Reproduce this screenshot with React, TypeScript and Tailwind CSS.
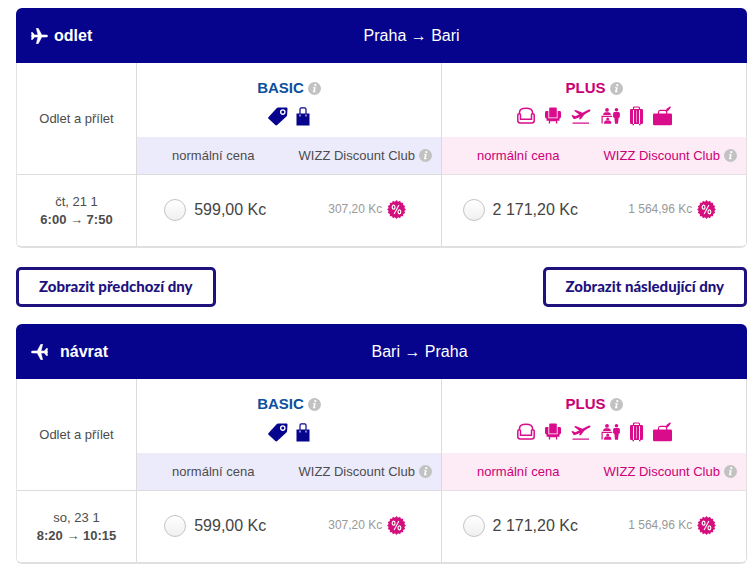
import { useId, type ReactNode } from "react";

type Fare = { price: string; club: string };

type Flight = {
  kind: "outbound" | "return";
  title: string;
  route: string;
  day: string;
  time: string;
  basic: Fare;
  plus: Fare;
};

const flights: Flight[] = [
  {
    kind: "outbound",
    title: "odlet",
    route: "Praha → Bari",
    day: "čt, 21 1",
    time: "6:00 → 7:50",
    basic: { price: "599,00 Kc", club: "307,20 Kc" },
    plus: { price: "2 171,20 Kc", club: "1 564,96 Kc" },
  },
  {
    kind: "return",
    title: "návrat",
    route: "Bari → Praha",
    day: "so, 23 1",
    time: "8:20 → 10:15",
    basic: { price: "599,00 Kc", club: "307,20 Kc" },
    plus: { price: "2 171,20 Kc", club: "1 564,96 Kc" },
  },
];

function Plane({ flip }: { flip: boolean }) {
  return (
    <svg
      viewBox="0 0 17 16"
      className={flip ? "h-4 w-[17px] -scale-x-100" : "h-4 w-[17px]"}
      fill="currentColor"
      stroke="currentColor"
      strokeWidth=".5"
      strokeLinejoin="round"
      aria-hidden="true"
    >
      <path d="M.3 4.500h1.400L3.600 6.900H7L5.300.3h1.900L10.800 6.900h3.800c1.400 0 2.200.5 2.200 1.100s-.8 1.100-2.200 1.100H10.800L7.200 15.700H5.300L7 9.100H3.600L1.700 11.500H.3L1 8.700H.3V7.300H1z" />
    </svg>
  );
}

function Info() {
  return (
    <svg viewBox="0 0 13 13" className="size-[13px] shrink-0" aria-hidden="true">
      <circle cx="6.5" cy="6.5" r="6.5" fill="#c2c2c2" />
      <circle cx="7.3" cy="3.2" r="1.1" fill="#fff" />
      <path d="M5 5.2h2.8L6.8 9.3h.9l-.2.9H4.9l1-4.1h-1z" fill="#fff" />
    </svg>
  );
}

function Percent() {
  const points = Array.from({ length: 32 }, (_, i) => {
    const r = i % 2 ? 8 : 9.4;
    const a = (i * Math.PI) / 16;
    return `${(9.5 + r * Math.sin(a)).toFixed(2)},${(9.5 - r * Math.cos(a)).toFixed(2)}`;
  }).join(" ");
  return (
    <svg viewBox="0 0 19 19" className="size-[19px] shrink-0" aria-hidden="true">
      <polygon points={points} fill="#d40f7d" />
      <g fill="none" stroke="#fff" strokeWidth="1.2">
        <ellipse cx="6.600" cy="7.200" rx="1.400" ry="2" />
        <ellipse cx="12.400" cy="11.800" rx="1.400" ry="2" />
        <path d="M11.900 4.900 7.100 14.100" strokeWidth="1.100" />
      </g>
    </svg>
  );
}

function BasicIcons() {
  return (
    <div className="flex h-5 items-center justify-center gap-2 text-[#06038d]">
      <svg viewBox="0 0 20 19" className="h-[19px] w-5" fill="currentColor" aria-hidden="true">
        <path
          fillRule="evenodd"
          d="M10.2.6 18 .4c1 0 1.500.5 1.500 1.400l-.4 6.200c0 .6-.2 1-.7 1.400L9.200 18.100c-.7.6-1.300.6-1.900 0L.6 11.800c-.6-.6-.6-1.300 0-1.900L8.600 1.300c.5-.5 1-.7 1.600-.7zM14.800 2.300a2.800 2.800 0 1 0 0 5.600 2.800 2.800 0 0 0 0-5.600z"
        />
        <circle cx="14.8" cy="5.1" r="1.5" />
      </svg>
      <svg viewBox="0 0 14 19" className="h-[19px] w-3.5" aria-hidden="true">
        <path d="M4 8V2.200Q4 .8 5.400.8h3.200Q10 .8 10 2.200V8" fill="none" stroke="currentColor" strokeWidth="1.2" />
        <path d="M.5 6.500h13v12H.5z" fill="currentColor" />
        <path d="M3.500 7.500h1v2h-1zM9.500 7.500h1v2h-1z" fill="#fff" />
      </svg>
    </div>
  );
}

function PlusIcons() {
  return (
    <div className="flex h-5 items-center justify-center gap-[10px] text-[#d90d8c]">
      {/* wide seat */}
      <svg viewBox="0 0 18 18" className="size-[18px]" fill="none" stroke="currentColor" aria-hidden="true">
        <path d="M2.500 6.800V5.500C2.500 2.500 4.500 1.300 9 1.300s6.500 1.200 6.500 4.200v1.300" strokeWidth="1.500" />
        <path d="M3.500 13V8Q3.500 6.800 2.200 6.800T.8 8v5.500q0 2.500 2.500 2.500h11.400q2.500 0 2.500-2.500V8q0-1.200-1.400-1.200T14.500 8v5" strokeWidth="1.500" />
        <path d="M3.500 12.300h11" strokeWidth="1.400" />
      </svg>
      {/* armchair */}
      <svg viewBox="0 0 16 18" className="h-[18px] w-4" fill="currentColor" aria-hidden="true">
        <path d="M4.200 1.500q0-1 1-1h5.600q1 0 1 1v9H4.200z" />
        <path d="M0 5.300q0-1.400 1.400-1.400h2v7.300h9.200V3.900h2Q16 3.900 16 5.300v4.200q0 1.800-1.500 2v2.200h-2.300v2.800h-1.300v-2.200H5.100v2.200H3.800v-2.800H1.500v-2.200Q0 11.300 0 9.500z" />
      </svg>
      {/* take-off */}
      <svg viewBox="0 0 20 18" className="h-[18px] w-5" fill="currentColor" aria-hidden="true">
        <path d="M.4 8.400 1.700 8l2.500 1.300 3.900-1.800L3 3.800l1.800-.7L11.500 5.800l4.900-2.600c1.300-.7 2.600-.9 3-.3s-.4 1.500-1.700 2.200L8.500 10.200 4 12.100 2.700 12z" />
        <path d="m9.500 8.500 5-2.600L9.800 12.300H8z" />
        <path d="M1.500 15.600H18v1.100H1.500z" />
      </svg>
      {/* check-in desk */}
      <svg viewBox="0 0 19 18" className="h-[18px] w-[19px]" fill="currentColor" aria-hidden="true">
        <circle cx="6" cy="2.900" r="1.900" />
        <path d="M2 8Q2.300 5.300 4.300 5.300h3.400Q9.700 5.300 10 8z" />
        <path d="M.5 8.800h10.700v1.300H1.700v6.400H.5z" />
        <circle cx="6.700" cy="12" r="1.500" />
        <path d="M3 16.800q0-3 2-3.200h3.400q2 .2 2 3.200z" />
        <circle cx="15.500" cy="2.700" r="1.800" />
        <path d="M13.600 5h3.800q1.500 0 1.500 1.500V10l-1.300 1-.6 5.700h-3L13.400 11l-1.300-1V6.500Q12.100 5 13.600 5z" />
      </svg>
      {/* suitcase */}
      <svg viewBox="0 0 13 20" className="h-5 w-[13px]" fill="currentColor" aria-hidden="true">
        <path d="M3.500 4V2Q3.500 1 4.500 1h4q1 0 1 1v2" fill="none" stroke="currentColor" strokeWidth="1.200" />
        <path d="M1.300 3H3v15H1.300Q0 18 0 16.700V4.300Q0 3 1.300 3zM4 3h5v15H4zM10 3h1.700Q13 3 13 4.300v12.400q0 1.300-1.300 1.300H10zM2.500 18H4v1.300H2.500zM9 18h1.500v1.300H9z" />
        <path d="M6.500 4.500v12" stroke="#fff" strokeWidth=".5" />
      </svg>
      {/* cabin bag */}
      <svg viewBox="0 0 19 20" className="h-5 w-[19px]" fill="currentColor" aria-hidden="true">
        <path d="M5.500 8V6.300Q5.500 4.400 7.200 4.400h5Q13.700 4.400 13.700 6v2" fill="none" stroke="currentColor" strokeWidth="1.200" />
        <path d="M1.200 7.600h16.600q1.200 0 1.200 1.200v9.200q0 1.200-1.200 1.200H1.200Q0 19.200 0 18V8.800q0-1.200 1.200-1.200z" />
        <path d="M12.300 5 14 2.500 17.200.2l.7 1-2.100 3-2.500 1.700z" />
      </svg>
    </div>
  );
}

function FareHead({ name, nameClass, children }: { name: string; nameClass: string; children: ReactNode }) {
  return (
    <th colSpan={2} scope="colgroup" className="h-[74px] border-r border-[#dcdcdc] p-0 pt-[15px] align-top font-normal">
      <div className="flex h-5 items-center justify-center gap-1">
        <span className={nameClass}>{name}</span>
        <Info />
      </div>
      <div className="pt-2">{children}</div>
    </th>
  );
}

function FareCells({ fare, group, value }: { fare: Fare; group: string; value: string }) {
  const id = useId();
  return (
    <>
      <td className="p-0 pb-[2px] pl-1">
        <div className="flex items-center justify-center gap-2">
          <input
            id={id}
            type="radio"
            name={group}
            value={value}
            className="size-[22px] appearance-none rounded-full border border-[#c4c4c4] bg-linear-to-b from-white to-[#f0f0f0] checked:border-[#06038d] checked:bg-[#06038d]"
          />
          <label htmlFor={id} className="text-base text-[#444]">
            {fare.price}
          </label>
        </div>
      </td>
      <td className="border-r border-[#dcdcdc] p-0 pb-[3px] pl-1">
        <div className="flex items-center justify-center gap-[5px] text-xs text-[#999]">
          <span>{fare.club}</span>
          <Percent />
        </div>
      </td>
    </>
  );
}

function ClubHead() {
  return (
    <div className="flex items-center justify-center gap-1">
      <span>WIZZ Discount Club</span>
      <Info />
    </div>
  );
}

function FlightCard({ flight }: { flight: Flight }) {
  const back = flight.kind === "return";
  return (
    <section className="overflow-hidden rounded-md border-b-2 border-[#e0e0e0] bg-white">
      <header className="flex h-[55px] items-center bg-[#06038d] pr-4 pl-[15px] text-base text-white">
        <h2 className={back ? "flex items-center gap-3 font-bold" : "flex items-center gap-[6px] font-bold"}>
          <Plane flip={back} />
          {flight.title}
        </h2>
        <p className="flex-1 text-center">{flight.route}</p>
      </header>
      <table className="w-full table-fixed border-separate border-spacing-0 border-l border-[#e4e4e4] text-[13px] text-[#4c4c4c]">
        <colgroup>
          <col className="w-[120px]" />
          <col />
          <col />
          <col />
          <col />
        </colgroup>
        <thead>
          <tr>
            <th rowSpan={2} scope="col" className="border-r border-b border-[#dcdcdc] p-0 font-normal">
              Odlet a přílet
            </th>
            <FareHead name="BASIC" nameClass="text-[15px] font-bold text-[#0b4f9e]">
              <BasicIcons />
            </FareHead>
            <FareHead name="PLUS" nameClass="text-[15px] font-bold text-[#cb0077]">
              <PlusIcons />
            </FareHead>
          </tr>
          <tr>
            <th scope="col" className="h-[38px] border-b border-[#dcdcdc] bg-[#ecebfb] p-0 font-normal">
              normální cena
            </th>
            <th scope="col" className="border-r border-b border-[#dcdcdc] bg-[#ecebfb] p-0 font-normal">
              <ClubHead />
            </th>
            <th scope="col" className="border-b border-[#e4e0e2] bg-[#fdecf6] p-0 font-normal text-[#cb0077]">
              normální cena
            </th>
            <th scope="col" className="border-r border-b border-[#e4e0e2] bg-[#fdecf6] p-0 font-normal text-[#cb0077]">
              <ClubHead />
            </th>
          </tr>
        </thead>
        <tbody>
          <tr>
            <td className="h-[71px] border-r border-[#dcdcdc] p-0 text-center leading-[18px]">
              {flight.day}
              <br />
              <strong>{flight.time}</strong>
            </td>
            <FareCells fare={flight.basic} group={flight.kind} value="basic" />
            <FareCells fare={flight.plus} group={flight.kind} value="plus" />
          </tr>
        </tbody>
      </table>
    </section>
  );
}

function DayButton({ children }: { children: ReactNode }) {
  return (
    <button
      type="button"
      className="h-10 rounded-[5px] border-3 border-[#1d127e] bg-white px-5 pb-[2px] font-[Lato,sans-serif] text-[15px] font-black text-[#1d127e]"
    >
      {children}
    </button>
  );
}

export default function App() {
  return (
    <main className="bg-white pt-2 pr-[9px] pb-2 pl-4 font-['Liberation_Sans',Arial,sans-serif]">
      <FlightCard flight={flights[0]} />
      <nav className="flex justify-between pt-[19px] pb-[17px]">
        <DayButton>Zobrazit předchozí dny</DayButton>
        <DayButton>Zobrazit následující dny</DayButton>
      </nav>
      <FlightCard flight={flights[1]} />
    </main>
  );
}
